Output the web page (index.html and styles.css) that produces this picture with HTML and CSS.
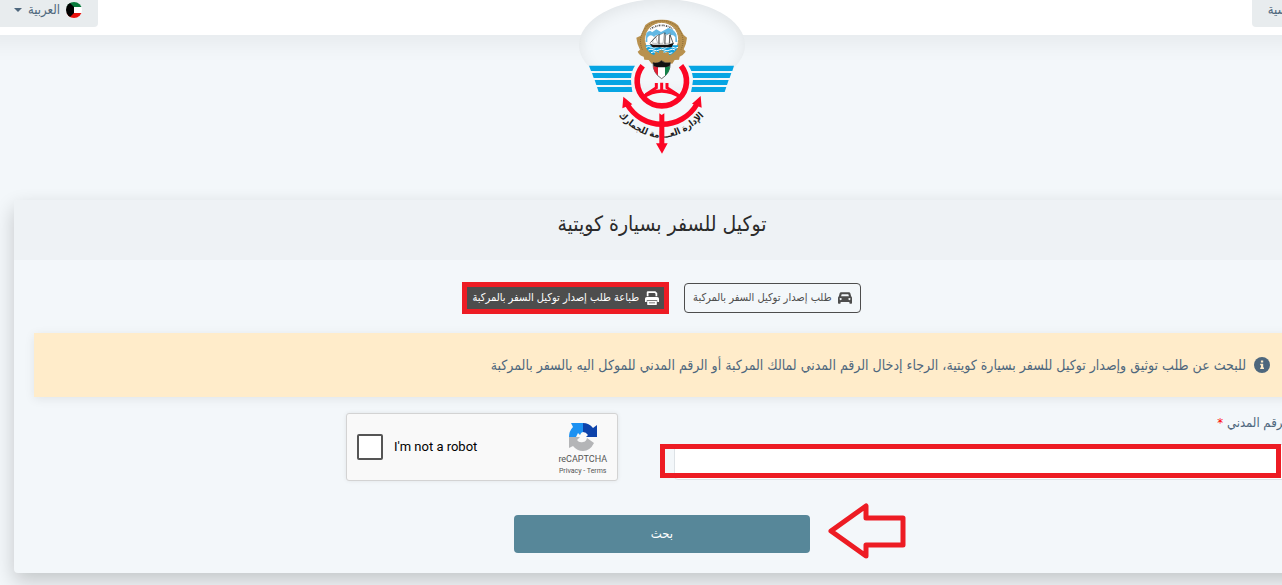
FILE: index.html
```html
<!DOCTYPE html>
<html lang="ar">
<head>
    <meta charset="utf-8">
    <title>توكيل للسفر بسيارة كويتية</title>
    <link rel="stylesheet" href="styles.css">
</head>
<body>
    <div class="page" dir="rtl">
        <header class="topbar">
            <a class="tab tab-home" href="#">الرئيسية</a>
            <button class="tab tab-lang" type="button">
                <svg class="flag" viewBox="0 0 16 16">
                    <clipPath id="round"><circle cx="8" cy="8" r="8"/></clipPath>
                    <g clip-path="url(#round)">
                        <path fill="#fff" d="M0 0h16v16H0z"/>
                        <path fill="#087a3c" d="M0 0h16v5H0z"/>
                        <path fill="#e8100c" d="M0 11h16v5H0z"/>
                        <path fill="#000" d="M0 0h3l5 5v6l-5 5H0z"/>
                    </g>
                </svg>
                <span>العربية</span>
                <span class="caret"></span>
            </button>
        </header>

        <div class="brand">
            <svg class="logo" viewBox="60 57 438 408">
                <!-- wings -->
                <g fill="#06a5e3">
                    <path d="M60 197H198Q193 204 190 213H66zM69 219H188L186 234H74zM77 240H186L187 255H82zM84 261H188L190 276H89z"/>
                    <path d="M495 197H358Q364 204 367 213H490zM487 219H369L372 234H482zM479 240H372L370 255H474zM472 261H369L366 276H467z"/>
                </g>
                <!-- steering wheel -->
                <g fill="none" stroke="#fc0624">
                    <path stroke-width="17" d="M221 197A74 74 0 1 0 336 197"/>
                    <path stroke-width="9" d="M278 248V274M262 249V263L230 284M294 249V263L326 284"/>
                    <path stroke-width="11" d="M220 292Q278 254 337 292"/>
                </g>
                <!-- anchor -->
                <path fill="none" stroke="#fc0624" stroke-width="16" d="M174 312A121 121 0 0 0 384 312"/>
                <path fill="#fc0624" d="M163 290L190 313L160 325zM395 288L398 323L369 311z"/>
                <!-- state emblem -->
                <g>
                    <path fill="#b8914e" d="M229 75Q247 58 278 59Q310 58 327 76L344 105L354 113Q352 134 344 148L350 155Q342 166 332 170L330 179L317 180L310 191L295 189L279 197L263 189L248 191L239 180L226 179L224 170Q211 167 206 155L213 149Q204 133 202 113L215 107z"/>
                    <path fill="none" stroke="#6d5229" stroke-width="2" stroke-dasharray="3 3" d="M220 149Q204 112 234 78Q278 46 324 79Q352 112 336 149"/>
                    <circle cx="278" cy="118" r="51" fill="#fff" stroke="#b8914e" stroke-width="3"/>
                    <path fill="#62b8e4" d="M232 100Q243 87 249 97L262 88L276 96L298 84Q314 86 322 103L325 126H230z"/>
                    <path fill="#fff" d="M235 113q10-13 20-2q12-14 21 0q13-15 23-2q12-9 20 3v16h-84z"/>
                    <path fill="#12a2df" d="M229 136H328Q323 158 300 166H256Q234 157 229 136z"/>
                    <path fill="none" stroke="#fff" stroke-width="3" d="M231 142q8-5 16 0t16 0t16 0t16 0t16 0t16 0M238 150q8-5 16 0t16 0t16 0t16 0t16 0M246 158q8-5 16 0t16 0t16 0t16 0"/>
                    <path fill="#111" d="M241 130L252 134H296L315 128L308 142H251z"/>
                    <path fill="#fff" stroke="#444" stroke-width="1" d="M251 130Q248 119 260 110L266 130zM269 130L270 106L286 98L282 130zM286 130L290 106L304 99L300 130z"/>
                    <path fill="none" stroke="#111" stroke-width="2" d="M270 103V133M288 98V133M302 105V131M244 128L266 105M303 104L312 129"/>
                    <path fill="none" stroke="#555" stroke-width="5" stroke-dasharray="2 3 4 2" d="M244 87Q278 65 312 87"/>
                    <path fill="#b8914e" d="M260 154L271 160Q266 149 278 151Q286 151 283 160L298 155L304 178L279 187L251 178z"/>
                    <path fill="#fff" stroke="#222" stroke-width="2" d="M252 188Q268 192 277 182Q288 192 304 188Q304 220 278 236Q251 220 252 188z"/>
                    <path fill="#dc1e32" d="M253 199H267V227Q253 215 253 199z"/>
                    <path fill="#128248" d="M288 199H303Q302 216 288 228z"/>
                    <path fill="#111" d="M252 188Q268 192 277 182Q288 192 304 188L302 199L288 202H267L254 199z"/>
                </g>
                <path id="ribbon" fill="none" d="M118 312Q278 515 436 312"/>
                <text class="logo-text"><textPath href="#ribbon" startOffset="50%">الإدارة العـــامة للجمارك</textPath></text>
                <path fill="#fc0624" d="M271 340L278 345L286 340V430H296L279 461L261 430H271z"/>
            </svg>
        </div>

        <main class="card">
            <h1 class="card-title">توكيل للسفر بسيارة كويتية</h1>
            <div class="card-body">
                <div class="actions">
                    <button class="action" type="button">
                        <svg class="icon" viewBox="0 0 16 16"><path fill="currentColor" fill-rule="evenodd" d="M3.500 1.500h9q1.200 0 1.600 1.200L15 6q1 .6 1 2v5.800q0 .8-.8.8h-1.400q-.8 0-.8-.8V12.500H3v1.300q0 .8-.8.8H.8q-.8 0-.8-.8V8q0-1.400 1-2l.9-3.300q.4-1.200 1.600-1.200zM4.200 3.700L3.500 6h9l-.7-2.300zM3 8a1.200 1.200 0 1 0 .1 0zm10 0a1.200 1.200 0 1 0 .1 0z"/></svg>
                        طلب إصدار توكيل السفر بالمركبة
                    </button>
                    <button class="action action-active" type="button">
                        <svg class="icon" viewBox="0 0 16 16"><path fill="currentColor" fill-rule="evenodd" d="M2 1.500Q2 .2 3.200 .2h8.600L14 2.400V6h-2V3.200L11 2.200H4V6H2zM2 6.800h12q2 0 2 2v3.700h-2V10.500H2v2H0V8.800q0-2 2-2zM2.500 11.500h11V15q0 1-1 1h-9q-1 0-1-1zM4.500 13v1h7v-1z"/></svg>
                        طباعة طلب إصدار توكيل السفر بالمركبة
                    </button>
                </div>

                <div class="notice">
                    <svg class="icon" viewBox="0 0 16 16"><circle cx="8" cy="8" r="8" fill="currentColor"/><path fill="#ffecca" d="M6.900 3.500h2.300v2H6.900zM6.200 6.800h3v3.800h.8v1.400H6.200v-1.400H7V8.200h-.8z"/></svg>
                    <span>للبحث عن طلب توثيق وإصدار توكيل للسفر بسيارة كويتية، الرجاء إدخال الرقم المدني لمالك المركبة أو الرقم المدني للموكل اليه بالسفر بالمركبة</span>
                </div>

                <form class="search" id="search">
                    <div class="field">
                        <label for="civilId">الرقم المدني <span class="required">*</span></label>
                        <div class="marked">
                            <input id="civilId" class="civil-id" type="text">
                        </div>
                    </div>
                    <div class="captcha" dir="ltr">
                        <input id="robot" class="captcha-box" type="checkbox">
                        <label class="captcha-label" for="robot">I'm not a robot</label>
                        <div class="captcha-brand">
                            <svg class="captcha-logo" viewBox="0 0 28 28">
                                <path fill="#1c91f2" d="M14 0v9q-2 0-3 3l-2-2-2 4H0Q0 8 4 4L2 0z"/>
                                <path fill="#0d43ab" d="M14 0q6 0 10 5l4-3v12H17l2-2q-2-3-5-3z"/>
                                <path fill="#b4b5b7" d="M0 14h11l-3 3q2 3 6 2 3 0 4-4l7 5q-4 8-11 8-6 0-10-5l-4 2z"/>
                            </svg>
                            <span class="captcha-name">reCAPTCHA</span>
                            <span class="captcha-links"><a href="#">Privacy</a> - <a href="#">Terms</a></span>
                        </div>
                    </div>
                </form>

                <div class="submit-row">
                    <button class="submit" type="submit" form="search">بحث</button>
                    <svg class="pointer" viewBox="0 0 78 58"><path fill="none" stroke="#ed1c24" stroke-width="5" stroke-linejoin="round" d="M3 29L38 4V16H75V43H38V54z"/></svg>
                </div>
            </div>
        </main>
    </div>
</body>
</html>
```

FILE: styles.css
```css
* {
    box-sizing: border-box;
}
html {
    background: #f3f7fa;
}
body {
    margin: 0;
    overflow: hidden;
    color: #4e677d;
    font-family: "DejaVu Sans Condensed", "DejaVu Sans", sans-serif;
    font-size: 13px;
    line-height: 20px;
}
button, input {
    font: inherit;
}
/* the page runs a little wider than the window */
.page {
    width: calc(100% + 42px);
    min-height: 100vh;
}
.topbar {
    display: flex;
    justify-content: space-between;
    align-items: flex-start;
    height: 35px;
    background: #fff;
    box-shadow: 0 -10px 20px 20px rgba(0, 0, 0, 0.05);
}
.tab {
    display: flex;
    align-items: center;
    height: 27px;
    padding: 0 16px 8px;
    border: 0;
    background: #e8ecee;
    color: #4e677d;
    text-decoration: none;
}
.tab-home {
    border-radius: 0 0 4px 4px;
}
.tab-lang {
    gap: 6px;
    padding-left: 14px;
    border-radius: 0 0 4px 0;
}
.flag {
    width: 16px;
    height: 16px;
}
.caret {
    border: 4px solid transparent;
    border-top-color: #4e677d;
    border-bottom: 0;
}
.brand {
    position: relative;
    display: flex;
    justify-content: center;
    width: 166px;
    height: 92px;
    margin: -36px auto 109px;
    padding-top: 20px;
    border-radius: 50%;
    background: #f3f7fa;
    box-shadow: inset 0 4px 16px rgba(0, 0, 0, 0.08);
}
.logo {
    flex: none;
    width: 146px;
    height: 136px;
}
.logo-text {
    fill: #222;
    font-size: 28px;
    font-weight: bold;
    text-anchor: middle;
}
.card {
    margin: 0 14px;
    border-radius: 4px;
    background: #f3f7fa;
    box-shadow: 0 8px 20px rgba(0, 0, 0, 0.2);
}
.card-title {
    margin: 0;
    padding: 8px 0 20px;
    border-radius: 4px 4px 0 0;
    background: #eef2f5;
    color: #2b2b2b;
    font-size: 21px;
    font-weight: normal;
    line-height: 32px;
    text-align: center;
}
.card-body {
    padding: 23px 20px 20px;
}
.actions {
    display: flex;
    justify-content: center;
    gap: 16px;
    margin-bottom: 20px;
}
.action {
    display: flex;
    align-items: center;
    gap: 6px;
    height: 30px;
    padding: 0 8px;
    border: 1px solid #4d4d4d;
    border-radius: 4px;
    background: transparent;
    color: #4d4d4d;
    font-size: 11px;
}
.action-active {
    border-radius: 0;
    background: #4d4d4d;
    color: #fff;
    outline: 5px solid #ed1c24;
    outline-offset: -4px;
}
.icon {
    flex: none;
    width: 14px;
    height: 14px;
}
.notice {
    display: flex;
    align-items: center;
    gap: 8px;
    height: 64px;
    padding: 0 20px;
    background: #ffecca;
    box-shadow: 0 2px 10px rgba(0, 0, 0, 0.08);
    font-size: 14px;
}
.notice .icon {
    width: 16px;
    height: 16px;
}
.search {
    display: flex;
    align-items: flex-start;
    gap: 56px;
    padding-top: 16px;
}
.field {
    width: 616px;
}
.required {
    color: #f00;
}
.marked {
    position: relative;
    margin-top: 11px;
}
.marked::after {
    content: "";
    position: absolute;
    inset: 0 9px 2px -14px;
    border: 5px solid #ed1c24;
    pointer-events: none;
}
.civil-id {
    display: block;
    width: 100%;
    height: 36px;
    padding: 6px 12px;
    border: 1px solid #dde2e6;
    border-radius: 4px;
    background: #fff;
}
.captcha {
    display: flex;
    align-items: center;
    width: 272px;
    height: 68px;
    padding: 0 10px;
    border: 1px solid #d3d3d3;
    border-radius: 3px;
    background: #f9f9f9;
    box-shadow: 0 0 4px rgba(0, 0, 0, 0.08);
    color: #000;
    font-family: Roboto, sans-serif;
}
.captcha-box {
    appearance: none;
    width: 26px;
    height: 26px;
    margin: 0 11px 0 0;
    border: 2px solid #555;
    border-radius: 2px;
    background: #fff;
}
.captcha-label {
    flex: 1;
}
.captcha-brand {
    display: flex;
    flex-direction: column;
    align-items: center;
    padding-top: 4px;
    color: #555;
}
.captcha-logo {
    width: 28px;
    height: 28px;
}
.captcha-name {
    font-size: 9px;
    line-height: 16px;
}
.captcha-links {
    font-size: 7px;
    line-height: 8px;
}
.captcha-links a {
    color: inherit;
    text-decoration: none;
}
.submit-row {
    position: relative;
    width: 296px;
    margin: 34px auto 0;
}
.submit {
    width: 100%;
    height: 38px;
    border: 0;
    border-radius: 4px;
    background: #578799;
    color: #fff;
}
.pointer {
    position: absolute;
    top: -13px;
    left: 314px;
    width: 78px;
    height: 58px;
}
```
